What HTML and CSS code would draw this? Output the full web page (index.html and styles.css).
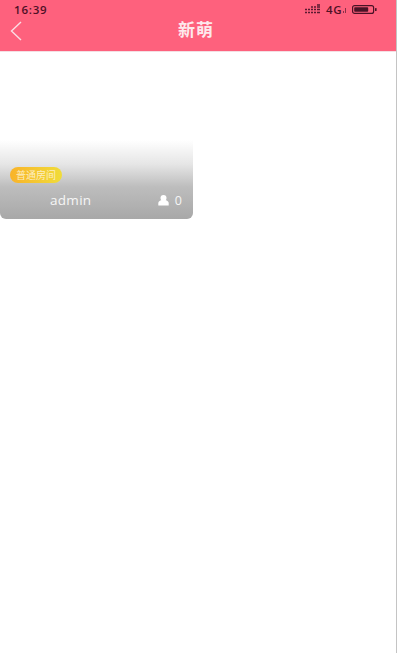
FILE: index.html
```html
<!DOCTYPE html>
<html lang="zh">
    <head>
        <meta charset="UTF-8">
        <title>新萌</title>
        <link rel="stylesheet" href="styles.css">
    </head>
    <body>
        <div class="screen">
            <div class="header">
                <div class="status">
                    <span class="time">16:39</span>
                    <div class="status-right">
                        <svg class="signal" width="16" height="10" viewBox="0 0 16 10">
                            <path d="M0 8.5h2M3 8.5h2M6 8.5h2M9 8.5h2M12 8.5h3M0 5.5h2M3 5.5h2M6 5.5h2M9 5.5h2M12 5.5h3M6 3h2M9 3h2M12 3h3M12 1h3" stroke="#5a1a30" stroke-width="1.6" fill="none"/>
                        </svg>
                        <span class="net">4G</span>
                        <svg class="mini" width="4" height="5" viewBox="0 0 4 5">
                            <path d="M.5 5V3M2.5 5V0" stroke="#8a3048" stroke-width="1" fill="none"/>
                        </svg>
                        <svg class="battery" width="25" height="9" viewBox="0 0 25 9">
                            <rect x=".6" y=".6" width="21" height="7.8" rx="2" fill="none" stroke="#4a1226" stroke-width="1.2"/>
                            <rect x="2.2" y="2.2" width="14" height="4.6" rx=".8" fill="#4a1226"/>
                            <rect x="23" y="3" width="1.6" height="3" rx=".6" fill="#4a1226"/>
                        </svg>
                    </div>
                </div>
                <div class="title-row">
                    <svg class="back" width="12" height="20" viewBox="0 0 12 20">
                        <path d="M11 1 1.5 10 11 19" fill="none" stroke="#fbdde4" stroke-width="1.4"/>
                    </svg>
                    <h1 class="title">新萌</h1>
                </div>
            </div>
            <div class="rooms">
                <div class="room">
                    <span class="tag">普通房间</span>
                    <div class="room-info">
                        <span class="name">admin</span>
                        <span class="count">
                            <svg width="11" height="11" viewBox="0 0 11 11">
                                <circle cx="5.5" cy="3" r="3" fill="#fff"/>
                                <path d="M.3 10.6V8C.3 6.6 1.8 5.6 3.6 5h3.8c1.8.6 3.3 1.6 3.3 3v2.6z" fill="#fff"/>
                            </svg>
                            0
                        </span>
                    </div>
                </div>
            </div>
        </div>
    </body>
</html>
```

FILE: styles.css
```css
html, body {
    height: 100%;
}
body {
    margin: 0;
    background-color: white;
    font-family: "Noto Sans CJK SC", "Open Sans", sans-serif;
}

.screen {
    width: 396px;
    height: 653px;
    border-right: 1px solid #c4c4c4;
    background-color: white;
}

.header {
    height: 51px;
    background-color: #fe617d;
    border-bottom: 1px solid #f4dfe3;
}
.status {
    height: 17px;
    display: flex;
    justify-content: space-between;
    align-items: center;
    padding: 1px 19px 0 14px;
    box-sizing: border-box;
}
.time {
    font-family: "Open Sans", sans-serif;
    font-size: 11.5px;
    font-weight: 600;
    letter-spacing: 0.8px;
    color: #4e1026;
}
.status-right {
    display: flex;
    align-items: center;
}
.signal {
    margin-right: 5px;
}
.net {
    font-family: "Open Sans", sans-serif;
    font-size: 11.5px;
    font-weight: 600;
    color: #4e1026;
    letter-spacing: 0.5px;
}
.mini {
    margin: 3px 5px 0 1px;
}

.title-row {
    height: 28px;
    display: flex;
    align-items: center;
    justify-content: center;
    padding: 0 4px 5px 0;
    box-sizing: border-box;
    position: relative;
}
.back {
    position: absolute;
    left: 10px;
    top: 4px;
}
.title {
    margin: 0;
    font-size: 17px;
    font-weight: 700;
    letter-spacing: 1px;
    color: #fde8ec;
}

.rooms {
    display: flex;
}
.room {
    width: 193px;
    height: 167px;
    box-sizing: border-box;
    border-radius: 0 0 6px 6px;
    background: linear-gradient(to bottom, #fff 0, #fff 88px, #e6e6e6 112px, #bdbdbd 135px, #a8a8a8 167px);
    display: flex;
    flex-direction: column;
    justify-content: flex-end;
}
.tag {
    align-self: flex-start;
    margin: 0 0 7px 10px;
    padding: 0 6px;
    height: 16px;
    line-height: 16px;
    border-radius: 8px;
    background: linear-gradient(to right, #f9b32a, #f0dc3a);
    color: #fdeec0;
    font-size: 10px;
}
.room-info {
    display: flex;
    justify-content: space-between;
    align-items: center;
    height: 20px;
    margin-bottom: 9px;
    padding: 0 11px 0 50px;
    color: #f6f6f6;
    font-family: "Open Sans", sans-serif;
}
.name {
    font-size: 13.5px;
    letter-spacing: 0.3px;
}
.count {
    display: flex;
    align-items: center;
    gap: 6px;
    font-size: 12.5px;
}
```
